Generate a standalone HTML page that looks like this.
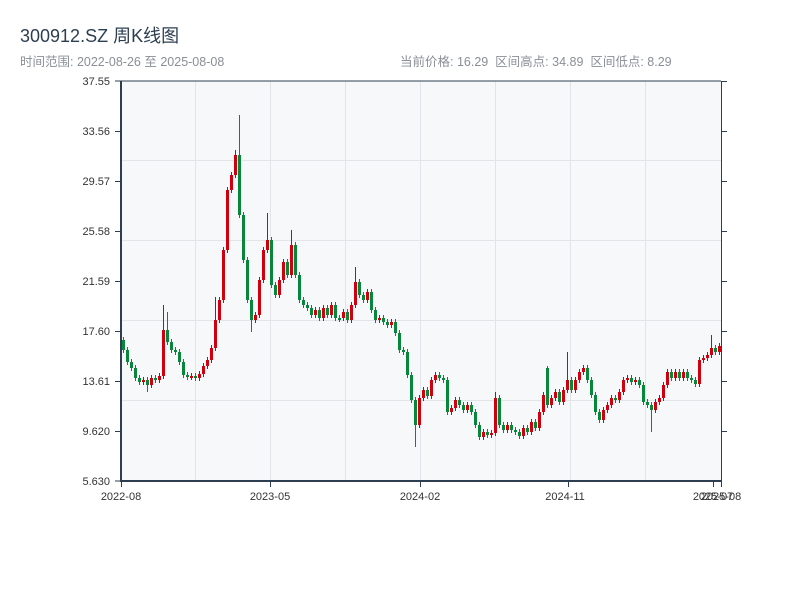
<!DOCTYPE html>
<html><head><meta charset="utf-8"><style>
body{margin:0;background:#fff;width:800px;height:600px;overflow:hidden;font-family:"Liberation Sans","Noto Sans CJK SC",sans-serif;}
.t{position:absolute;left:20px;top:22px;font-size:18px;color:#2c3e50;}
.s{position:absolute;top:51px;font-size:12.5px;color:#8a8f96;}
</style></head><body>
<div class="t">300912.SZ 周K线图</div>
<div class="s" style="left:20px">时间范围: 2022-08-26 至 2025-08-08</div>
<div class="s" style="left:400px">当前价格: 16.29&nbsp;&nbsp;区间高点: 34.89&nbsp;&nbsp;区间低点: 8.29</div>
<svg width="800" height="600" style="position:absolute;left:0;top:0" xmlns="http://www.w3.org/2000/svg">
<rect x="121" y="81" width="600" height="400" fill="#f7f8fa"/>
<g stroke="#e1e4e9" stroke-width="1">
<line x1="121" y1="160.5" x2="721" y2="160.5"/><line x1="121" y1="240.5" x2="721" y2="240.5"/>
<line x1="121" y1="320.5" x2="721" y2="320.5"/><line x1="121" y1="400.5" x2="721" y2="400.5"/>
<line x1="195.5" y1="81" x2="195.5" y2="481"/><line x1="270.5" y1="81" x2="270.5" y2="481"/>
<line x1="345.5" y1="81" x2="345.5" y2="481"/><line x1="420.5" y1="81" x2="420.5" y2="481"/>
<line x1="495.5" y1="81" x2="495.5" y2="481"/><line x1="570.5" y1="81" x2="570.5" y2="481"/>
<line x1="645.5" y1="81" x2="645.5" y2="481"/>
</g>
<g fill="none" transform="translate(0.5,0)">
<path stroke="#07873a" stroke-width="1" d="M123 337V353M127 347V365M131 359V371M135 365V381M139 375V385M147 377V392M155 375V383M167 312V345M171 339V353M175 347V355M179 349V365M183 359V378M187 372V380M195 373V381M239 115V218M243 212V263M247 257V303M251 297V332M271 237V288M275 282V298M287 259V278M295 242V278M299 272V303M303 297V308M307 302V311M311 305V318M319 307V321M327 305V318M335 302V321M339 315V322M347 309V323M359 279V298M363 292V303M371 289V313M375 307V323M383 315V325M387 319V328M395 319V336M399 330V353M403 347V355M407 349V378M411 372V403M415 397V447M427 387V399M439 372V381M443 375V383M447 377V415M459 397V408M463 402V413M471 402V415M475 409V428M479 422V440M487 429V438M499 395V428M503 422V433M511 422V433M515 427V435M519 429V439M527 425V435M535 419V431M547 366V408M559 389V405M571 377V393M587 365V383M591 377V398M595 392V415M599 409V423M615 395V403M631 375V385M639 377V388M643 382V405M647 399V408M651 402V432M671 369V381M679 369V381M687 369V381M691 375V383M695 377V387M715 345V355"/>
<path stroke="#07873a" stroke-width="3" d="M123 340V350M127 350V362M131 362V368M135 368V378M139 378V382M147 380V385M155 378V380M167 330V342M171 342V350M175 350V352M179 352V362M183 362V375M187 375V377M195 376V378M239 155V215M243 215V260M247 260V300M251 300V320M271 240V285M275 285V295M287 262V275M295 245V275M299 275V300M303 300V305M307 305V308M311 308V315M319 310V318M327 308V315M335 305V318M339 318V320M347 312V320M359 282V295M363 295V300M371 292V310M375 310V320M383 318V322M387 322V325M395 322V333M399 333V350M403 350V352M407 352V375M411 375V400M415 400V425M427 390V396M439 375V378M443 378V380M447 380V412M459 400V405M463 405V410M471 405V412M475 412V425M479 425V437M487 432V435M499 398V425M503 425V430M511 425V430M515 430V432M519 432V436M527 428V432M535 422V428M547 368V405M559 392V402M571 380V390M587 368V380M591 380V395M595 395V412M599 412V420M615 398V400M631 378V382M639 380V385M643 385V402M647 402V405M651 405V410M671 372V378M679 372V378M687 372V378M691 378V380M695 380V384M715 348V352"/>
<path stroke="#d0000e" stroke-width="1" d="M143 377V385M151 375V388M159 373V383M163 305V379M191 373V380M199 371V381M203 363V377M207 357V369M211 345V363M215 297V351M219 297V323M223 247V303M227 187V253M231 172V193M235 150V178M255 312V323M259 277V318M263 247V283M267 213V253M279 277V298M283 259V283M291 230V278M315 307V318M323 305V321M331 302V318M343 309V321M351 302V323M355 267V308M367 289V303M379 315V323M391 319V328M419 395V428M423 387V401M431 377V399M435 372V383M451 405V415M455 397V411M467 402V413M483 429V440M491 430V438M495 392V436M507 422V433M523 425V439M531 419V435M539 409V431M543 392V415M551 395V408M555 389V401M563 387V405M567 352V393M575 377V393M579 369V383M583 365V375M603 407V423M607 402V413M611 395V408M619 389V403M623 377V395M627 375V383M635 377V385M655 399V413M659 395V405M663 382V401M667 369V388M675 369V381M683 369V381M699 357V387M703 355V363M707 352V361M711 335V358M719 343V355"/>
<path stroke="#d0000e" stroke-width="3" d="M143 380V382M151 378V385M159 376V380M163 330V376M191 376V378M199 374V378M203 366V374M207 360V366M211 348V360M215 320V348M219 300V320M223 250V300M227 190V250M231 175V190M235 155V175M255 315V320M259 280V315M263 250V280M267 240V250M279 280V295M283 262V280M291 245V275M315 310V315M323 308V318M331 305V315M343 312V318M351 305V320M355 282V305M367 292V300M379 318V320M391 322V325M419 398V425M423 390V398M431 380V396M435 375V380M451 408V412M455 400V408M467 405V410M483 432V437M491 433V435M495 398V433M507 425V430M523 428V436M531 422V432M539 412V428M543 395V412M551 398V405M555 392V398M563 390V402M567 380V390M575 380V390M579 372V380M583 368V372M603 410V420M607 405V410M611 398V405M619 392V400M623 380V392M627 378V380M635 380V382M655 402V410M659 398V402M663 385V398M667 372V385M675 372V378M683 372V378M699 360V384M703 358V360M707 355V358M711 348V355M719 346V352"/>
</g>
<g stroke="#2c3e50" stroke-width="1">
<line x1="115" y1="81" x2="721" y2="81"/>
<line x1="721.5" y1="81" x2="721.5" y2="481"/>
<line x1="115" y1="131.5" x2="121" y2="131.5"/><line x1="115" y1="181.5" x2="121" y2="181.5"/>
<line x1="115" y1="231.5" x2="121" y2="231.5"/><line x1="115" y1="281.5" x2="121" y2="281.5"/>
<line x1="115" y1="331.5" x2="121" y2="331.5"/><line x1="115" y1="381.5" x2="121" y2="381.5"/>
<line x1="115" y1="431.5" x2="121" y2="431.5"/><line x1="115" y1="481" x2="121" y2="481"/>
<line x1="721" y1="131.5" x2="727" y2="131.5"/><line x1="721" y1="181.5" x2="727" y2="181.5"/>
<line x1="721" y1="231.5" x2="727" y2="231.5"/><line x1="721" y1="281.5" x2="727" y2="281.5"/>
<line x1="721" y1="331.5" x2="727" y2="331.5"/><line x1="721" y1="381.5" x2="727" y2="381.5"/>
<line x1="721" y1="431.5" x2="727" y2="431.5"/><line x1="721" y1="81.5" x2="727" y2="81.5"/>
<line x1="121.5" y1="481" x2="121.5" y2="487"/><line x1="270.5" y1="481" x2="270.5" y2="487"/>
<line x1="420.5" y1="481" x2="420.5" y2="487"/><line x1="568.5" y1="481" x2="568.5" y2="487"/>
<line x1="713.5" y1="481" x2="713.5" y2="487"/><line x1="721.5" y1="481" x2="721.5" y2="487"/>
</g>
<line x1="121" y1="81" x2="121" y2="482" stroke="#2c3e50" stroke-width="2"/>
<line x1="120" y1="481" x2="722" y2="481" stroke="#2c3e50" stroke-width="2"/>
<g font-size="11" fill="#333" text-anchor="end" font-family="Liberation Sans,sans-serif">
<text x="110" y="85">37.55</text><text x="110" y="135">33.56</text><text x="110" y="185">29.57</text>
<text x="110" y="235">25.58</text><text x="110" y="285">21.59</text><text x="110" y="335">17.60</text>
<text x="110" y="385">13.61</text><text x="110" y="435">9.620</text><text x="110" y="485">5.630</text>
</g>
<g font-size="11" fill="#333" text-anchor="middle" font-family="Liberation Sans,sans-serif">
<text x="121" y="500">2022-08</text><text x="270" y="500">2023-05</text><text x="420" y="500">2024-02</text>
<text x="565" y="500">2024-11</text><text x="713" y="500">2025-07</text><text x="721" y="500">2025-08</text>
</g>
</svg>
</body></html>
